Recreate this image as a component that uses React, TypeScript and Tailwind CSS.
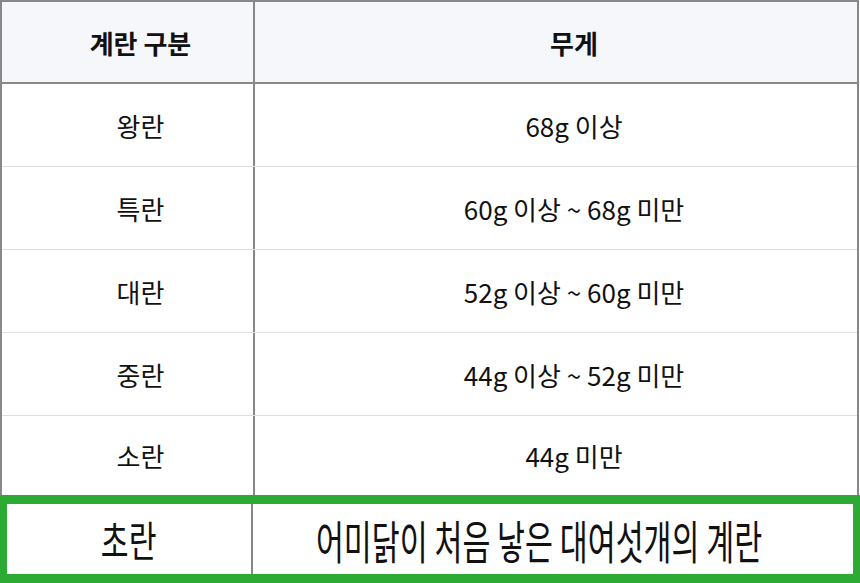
const rows = [
  { grade: "왕란", weight: "68g 이상" },
  { grade: "특란", weight: "60g 이상 ~ 68g 미만" },
  { grade: "대란", weight: "52g 이상 ~ 60g 미만" },
  { grade: "중란", weight: "44g 이상 ~ 52g 미만" },
  { grade: "소란", weight: "44g 미만" },
];

export default function App() {
  return (
    <div
      className="w-[860px] h-[583px] bg-white text-[#111] overflow-hidden"
      style={{ fontFamily: '"Noto Sans CJK KR", "Noto Sans", sans-serif' }}
    >
      <div className="w-[859px] border-x-2 border-t-2 border-[#888]">
        {/* header */}
        <div className="flex h-[82px] border-b-2 border-[#888] bg-[#f5f7fb] text-[26px] font-bold">
          <div className="w-[253px] shrink-0 border-r-2 border-[#888] flex items-center justify-center pl-[26px]">
            계란 구분
          </div>
          <div className="flex-1 flex items-center justify-center pl-[36px]">무게</div>
        </div>

        {rows.map((r, i) => (
          <div
            key={r.grade}
            className={`flex text-[26px] ${
              i < rows.length - 1 ? "h-[83px] border-b border-[#dedede]" : "h-[79px]"
            }`}
          >
            <div className="w-[253px] shrink-0 border-r-2 border-[#888] flex items-center justify-center pl-[26px]">
              {r.grade}
            </div>
            <div className="flex-1 flex items-center justify-center pl-[36px]">{r.weight}</div>
          </div>
        ))}
      </div>

      {/* highlighted row */}
      <div className="flex w-[860px] h-[88px] border-y-[9px] border-x-[7px] border-[#2caa33] bg-white">
        <div className="w-[246px] shrink-0 border-r-2 border-[#888] flex items-center justify-center overflow-hidden">
          <span className="inline-block shrink-0 whitespace-nowrap text-[42px] leading-none font-normal scale-x-[0.72]">
            초란
          </span>
        </div>
        <div className="flex-1 flex items-center justify-center overflow-hidden pr-[28px]">
          <span className="inline-block shrink-0 whitespace-nowrap text-[46px] leading-none font-normal scale-x-[0.66]">
            어미닭이 처음 낳은 대여섯개의 계란
          </span>
        </div>
      </div>
    </div>
  );
}
